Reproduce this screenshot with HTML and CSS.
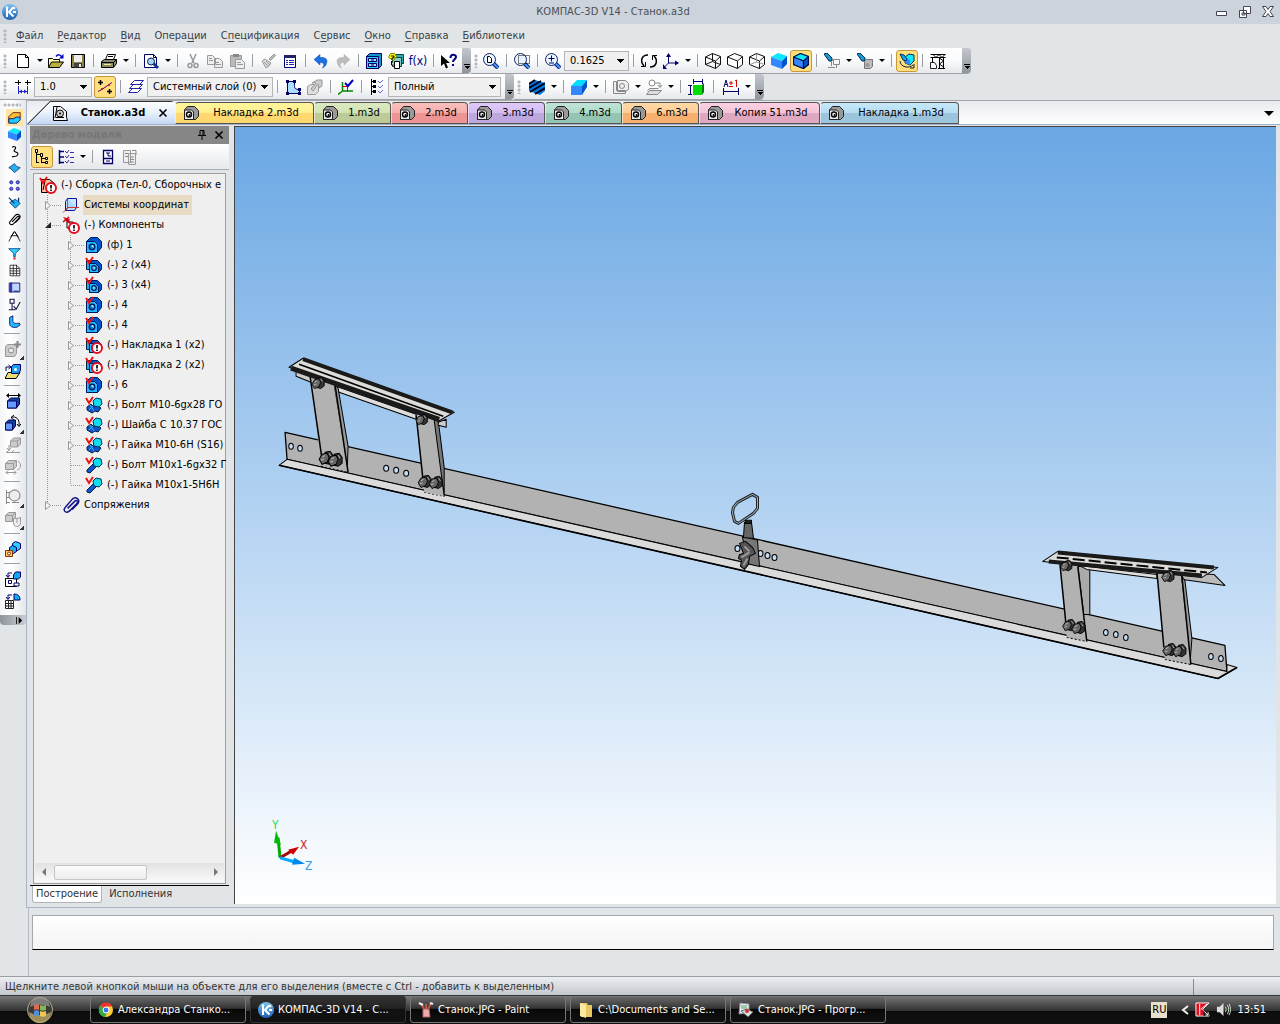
FILE: index.html
```html
<!DOCTYPE html>
<html lang="ru">
<head>
    <meta charset="UTF-8">
    <title>КОМПАС-3D V14 - Станок.a3d</title>
    <meta name="viewport" content="width=device-width, initial-scale=1.0">
    <link rel="stylesheet" href="styles.css">
</head>
<body>
    <!-- icon set -->
    <svg class="defs" aria-hidden="true">
        <defs>
            <linearGradient id="orb" x1="0" y1="0" x2="0" y2="1"><stop offset="0" stop-color="#7cc0f0"/><stop offset="1" stop-color="#1c62b4"/></linearGradient>
            <symbol id="kompas" viewBox="0 0 16 16"><circle cx="8" cy="8" r="8" fill="url(#orb)"/><path d="M5 3v10M11 3.500L7 8l4.500 4.500M11 8h3" stroke="#fff" stroke-width="2" fill="none"/><circle cx="5" cy="3.500" r="1.300" fill="#fff"/><circle cx="12" cy="4" r="1.300" fill="#fff"/></symbol>
            <symbol id="new" viewBox="0 0 16 16"><path d="M2.500 1.500h8l3 3v10h-11z" fill="#fff" stroke="#000"/><path d="M10.500 1.500v3h3" fill="none" stroke="#000"/></symbol>
            <symbol id="open" viewBox="0 0 16 16"><path d="M.5 14V5.500h4l1 1h6V9" fill="#ffffb0" stroke="#000"/><path d="M.5 14.500l3-5.500h12l-4 5.500z" fill="#b8b040" stroke="#000"/><path d="M8 3.500c2-2.500 4-2 6 .5" fill="none" stroke="#00c" stroke-width="1.500"/><path d="M15.500 1v4.500H11z" fill="#00c"/></symbol>
            <symbol id="save" viewBox="0 0 16 16"><path d="M1.500 1.500h13v13h-13z" fill="#8c8340" stroke="#000"/><path d="M4 2h8v7H4z" fill="#eee"/><path d="M4 10h8v4.500H4z" fill="#444"/><path d="M9 11h2v3H9z" fill="#eee"/></symbol>
            <symbol id="print" viewBox="0 0 16 16"><path d="M4.500 6.500l2-5h8l-2 5" fill="#fff" stroke="#000"/><path d="M.5 8.500l3-2h12v4l-3 4H.5z" fill="#8a8a68" stroke="#000"/><path d="M.5 9.500h12l3-3M7 3.500h5M12.500 9v5" stroke="#000" fill="none"/><path d="M3 11h7v1H3z" fill="#ee8"/></symbol>
            <symbol id="preview" viewBox="0 0 16 16"><path d="M1.500 1.500h9l3 3v10h-12z" fill="#fff" stroke="#006"/><path d="M10.500 1.500v3h3" fill="none" stroke="#006"/><path d="M10 10l5 5" stroke="#139" stroke-width="3"/><circle cx="8" cy="8.500" r="3.500" fill="#a8d4f4" stroke="#025"/></symbol>
            <symbol id="cut" viewBox="0 0 16 16"><path d="M5 1l4 9M11 1L7 10" stroke="#999" stroke-width="1.500"/><circle cx="5" cy="12.500" r="2" fill="none" stroke="#999" stroke-width="1.500"/><circle cx="11" cy="12.500" r="2" fill="none" stroke="#999" stroke-width="1.500"/></symbol>
            <symbol id="copy" viewBox="0 0 16 16"><path d="M.5 2.500h5l3 3v6h-8zM7.500 5.500h5l3 3v6h-8z" fill="#eee" stroke="#999"/><path d="M2 5.500h3M2 7.500h4M9 9.500h3M9 11.500h5" stroke="#999"/></symbol>
            <symbol id="paste" viewBox="0 0 16 16"><path d="M1.500 2.500h11v11h-11z" fill="#bbb" stroke="#999"/><path d="M4 1h6v3H4z" fill="#888"/><path d="M6.500 6.500h6l3 3v6h-9z" fill="#eee" stroke="#999"/><path d="M8 9.500h4M8 11.500h6" stroke="#999"/></symbol>
            <symbol id="brush" viewBox="0 0 16 16"><path d="M9 6l5-5 1.500 1.500-5 5z" fill="#bbb" stroke="#999"/><path d="M2 8l3-2 6 4-2 3-3 2z" fill="#ddd" stroke="#999"/><path d="M4 9l4 4M6 8l4 4" stroke="#999"/></symbol>
            <symbol id="list" viewBox="0 0 16 16"><path d="M2.500 2.500h11v12h-11z" fill="#fff" stroke="#000080"/><path d="M2 2h12v3H2z" fill="#226"/><path d="M4 7.500h2M7 7.500h5M4 9.500h2M7 9.500h5M4 11.500h2M7 11.500h5" stroke="#22c"/></symbol>
            <symbol id="undo" viewBox="0 0 16 16"><path d="M1 6.500l6-5v3c6-.5 8 2 6.500 6-.5 2-2 3.500-4 4.500 2-3 2-5.500-2.500-5.500V12z" fill="#1c6fe0" stroke="#0a46b0" stroke-width=".5"/></symbol>
            <symbol id="redo" viewBox="0 0 16 16"><path d="M15 6.500l-6-5v3c-6-.5-8 2-6.500 6 .5 2 2 3.500 4 4.500-2-3-2-5.500 2.500-5.500V12z" fill="#bcbcbc" stroke="#aaa" stroke-width=".5"/></symbol>
            <symbol id="lib" viewBox="0 0 16 16"><path d="M.5 3.500l3-3h12v12l-3 3H.5z" fill="#1298c8" stroke="#006"/><path d="M.5 3.500h12v12H.5z" fill="#3cf" stroke="#006"/><path d="M2.500 5.500h8v3h-8zM2.500 10.500h8v3h-8z" fill="#adf" stroke="#006"/><path d="M5 7h3M5 12h3" stroke="#006"/></symbol>
            <symbol id="vars" viewBox="0 0 16 16"><path d="M6.500 1.500h9v9h-9z" fill="#3aa" stroke="#044"/><path d="M4.500 4.500h9v9h-9z" fill="#8cc" stroke="#044"/><path d="M3.500 8v4h2M6.500 8.500h5v7h-5z" fill="#fff" stroke="#000"/><path d="M.5 4.500l2-4h4l2 3-3 4z" fill="#ff0" stroke="#880"/><path d="M3 3h3v2H4v2" fill="none" stroke="#000"/></symbol>
            <symbol id="cursor" viewBox="0 0 16 16"><path d="M0 2v11l3-2.500 2 5 2-1-2-4.500h4z"/><path d="M9.500 5c0-4.500 5.500-4 5.500-1 0 2-3 2.500-3 5M12 11v2" fill="none" stroke="#000080" stroke-width="2"/></symbol>
            <symbol id="glass" viewBox="0 0 16 16"><path d="M10 10l5 5" stroke="#027" stroke-width="4"/><path d="M10 10l5 5" stroke="#49f" stroke-width="2"/><circle cx="6.500" cy="6.500" r="6" fill="#e8f4ff" stroke="#126"/></symbol>
            <symbol id="zoompage" viewBox="0 0 16 16"><use href="#glass"/><path d="M4.500 3.500h2l2 2v4h-4z" fill="#fff" stroke="#000"/></symbol>
            <symbol id="zoomarea" viewBox="0 0 16 16"><use href="#glass"/><path d="M4.500 2.500h11v8h-11z" fill="none" stroke="#000" stroke-dasharray="1 1"/></symbol>
            <symbol id="zoompm" viewBox="0 0 16 16"><use href="#glass"/><path d="M3.500 5.500h6M6.500 2.500v6M4 10h5" stroke="#006"/></symbol>
            <symbol id="rotate" viewBox="0 0 16 16"><path d="M7 2C0 2-1 9 3 13M9 14c7 0 8-7 4-11" fill="none" stroke="#000" stroke-width="1.500"/><path d="M0 13.500h4.500V9M16 2.500h-4.500V7" fill="none" stroke="#000"/></symbol>
            <symbol id="axes" viewBox="0 0 16 16"><path d="M5.500 1v9H15M5.500 10L1 14.500" fill="none" stroke="#006"/><path d="M3 4l2.500-4L8 4zM12 7.500l4 2.500-4 2.500zM0 11v5h4z" fill="#006"/></symbol>
            <symbol id="wire" viewBox="0 0 16 16"><path d="M.5 4l7-3.500 8 3v8l-5 4-10-4zM.5 4l10 4v7.500M10.500 8l5-4.500M7.500.5v8l-7 3M7.500 8.500l8 3" fill="none" stroke="#111"/></symbol>
            <symbol id="hidden" viewBox="0 0 16 16"><path d="M.5 4l7-3.500 8 3v8l-5 4-10-4zM.5 4l10 4v7.500M10.500 8l5-4.500" fill="#fff" stroke="#111"/></symbol>
            <symbol id="thin" viewBox="0 0 16 16"><use href="#hidden"/><path d="M7.500 1v8L1 11.500M7.500 9l7 2" stroke="#999" fill="none"/></symbol>
            <symbol id="shaded" viewBox="0 0 16 16"><path d="M0 4l7-4 9 3-5 5z" fill="#0de8fc"/><path d="M0 4l11 4v8L0 12z" fill="#38f"/><path d="M11 8l5-5v8l-5 5z" fill="#05c"/></symbol>
            <symbol id="edged" viewBox="0 0 16 16"><use href="#shaded"/><path d="M.5 4l7-3.500 8 3v8l-5 4-10-4zM.5 4l10 4v7.500M10.500 8l5-4.500" fill="none" stroke="#00104a" stroke-width="1.300"/></symbol>
            <symbol id="torch" viewBox="0 0 16 16"><path d="M0 1l3-1 5 5v3H5z" fill="#179bd7" stroke="#024"/><path d="M7.500 9v4M4 14.500h7M9.500 6.500h6v5h-6zM12.500 12v3" fill="none" stroke="#888"/></symbol>
            <symbol id="torch2" viewBox="0 0 16 16"><path d="M0 1l3-1 5 5v3H5z" fill="#179bd7" stroke="#024"/><path d="M7.500 8.500l2-2h6v7l-2 2h-6z" fill="#bbb" stroke="#777"/><circle cx="10.500" cy="12" r="2" fill="#999"/></symbol>
            <symbol id="spin" viewBox="0 0 16 16"><path d="M6 4l4-3 5 1v6l-4 4-5-2z" fill="#0de8fc" stroke="#035"/><path d="M6 5l5 2v5l-5-2z" fill="#38f"/><path d="M1 1l4 1 3 4-1 2-3-1z" fill="#1aa4f0" stroke="#035"/><path d="M1 8c0 6 9 8 13 4M11 15h4v-4" fill="none" stroke="#123"/></symbol>
            <symbol id="crane" viewBox="0 0 16 16"><path d="M.5 1.500h15M.5 4.500h15M2.500 4v5M9.500 4v11M13.500 4v11M9.500 5l4 3-4 3 4 3M3 1.500l3 3 3-3 3 3 3-3M8 15.500h7" fill="none" stroke="#000"/><path d="M.5 9.500h4l2 3v3h-6z" fill="#fff" stroke="#222"/></symbol>
            <symbol id="dims" viewBox="0 0 16 16"><path d="M0 3.500h6M3.500 1v5M10 3.500h6M12.500 1v5" stroke="#000"/><path d="M3.500 7v8M12.500 7v8M4 12.500h8" stroke="#22c"/><path d="M4 12.500l3-2v4zM12 12.500l-3-2v4z" fill="#22c"/></symbol>
            <symbol id="snap" viewBox="0 0 16 16"><path d="M1 3.500h5M3.500 1v5M10 12.500h5M12.500 10v5" stroke="#000" stroke-width="1.500"/><path d="M1 12.500l4-2 7-5 3-2" stroke="#808"/><path d="M4 9h2v2H4zM11 5h2v2h-2z" fill="#a33"/></symbol>
            <symbol id="layers" viewBox="0 0 16 16"><path d="M.5 13.500l4-4h9l-4 4zM1.500 9.500l4-4h9l-4 4zM2.500 5.500l4-4h9l-4 4z" fill="#fff" stroke="#22a"/></symbol>
            <symbol id="sketch" viewBox="0 0 16 16"><path d="M2.500 2.500h7v4c0 3 1 4 5 4v4h-12z" fill="#adf" stroke="#006"/><path d="M1 1h3v3H1zM8 1h3v3H8zM1 13h3v3H1zM13 13h3v3h-3zM13 9h3v3h-3z" fill="#006"/></symbol>
            <symbol id="editpart" viewBox="0 0 16 16"><path d="M.5 7.500l3-2h8v7l-3 3h-8z" fill="#ddd" stroke="#999"/><path d="M5 4l5-3h5v6l-3 2-1-4-5 7-2-2 5-6z" fill="#ccc" stroke="#999"/></symbol>
            <symbol id="lcs" viewBox="0 0 16 16"><path d="M4.500 3v9H15M4.500 12L0 15.500" fill="none" stroke="#080" stroke-width="1.500"/><path d="M4.500 7.500h5v5" fill="none" stroke="#d00"/><path d="M7 4l3 3 5-6" fill="none" stroke="#00c" stroke-width="2"/></symbol>
            <symbol id="marks" viewBox="0 0 16 16"><path d="M2.500 0v16M2 2.500h4M2 7.500h4M2 12.500h4" stroke="#000"/><path d="M4 1h3v3H4zM4 6h3v3H4zM4 11h3v3H4z"/><path d="M9 2l2 2 3-3M9 7l2 2 3-3M9 12l2 2 3-3" fill="none" stroke="#66c"/></symbol>
            <symbol id="stripes" viewBox="0 0 16 16"><path d="M0 4l6-3 10 3v8l-5 4-11-4z" fill="#0078d8"/><path d="M0 5l6-4M0 9l12-7M1 13L16 4M6 15l10-6" stroke="#002" stroke-width="2"/></symbol>
            <symbol id="slant" viewBox="0 0 16 16"><path d="M0 7l6-6h10l-5 6z" fill="#0df"/><path d="M0 7h11v9H0z" fill="#38f"/><path d="M11 7l5-6v7l-5 8z" fill="#05c"/></symbol>
            <symbol id="shape" viewBox="0 0 16 16"><path d="M.5 2.500h3v9h9v3h-12zM4.500 1.500h8l3 3v6l-3 2h-8z" fill="#eee" stroke="#888"/><circle cx="9" cy="7" r="2.500" fill="none" stroke="#888"/></symbol>
            <symbol id="plane" viewBox="0 0 16 16"><path d="M.5 15.500l3-4h12l-4 4zM1.500 11.500l2-2h9" fill="#ddd" stroke="#888"/><circle cx="6" cy="4" r="3" fill="#fff" stroke="#888"/><path d="M9 4h5v4M11.500 6L14 8.500 16 6" fill="none" stroke="#888"/></symbol>
            <symbol id="measure" viewBox="0 0 16 16"><path d="M5 6h9v10H5z" fill="#0d0"/><path d="M14 6l2-2v9l-2 3z" fill="#070"/><path d="M5.500 0v5M14.500 0v5M6 2.500h8M0 6.500h4M0 15.500h4M2.500 7v8" stroke="#006"/></symbol>
            <symbol id="tol" viewBox="0 0 16 16"><path d="M1 8l2-7 2 7M2 5.500h2M.5 9v7M15.500 9v7M1 12.500h14" fill="none" stroke="#006"/><path d="M8 2v4M6 4h4M6 7.500h4M12 2l1.500-1v7" fill="none" stroke="#d00"/></symbol>
            <symbol id="asm" viewBox="0 0 16 16"><path d="M1.500 1.500h7l6 5v6l1 3h-14zM3 13l2-11" fill="#f4f4f4" stroke="#000"/><circle cx="8" cy="8.500" r="3.500" fill="#ccc" stroke="#000"/><circle cx="8" cy="8.500" r="1" /><path d="M4 12.500h8" stroke="#000"/></symbol>
            <symbol id="part" viewBox="0 0 16 16"><path d="M1.500 5l3-3.500h7l4 4v6l-3 3h-11z" fill="#999" stroke="#222"/><path d="M1.500 5h7l2 2v7.500h-9z" fill="#e8e8e8" stroke="#222"/><circle cx="6" cy="9.500" r="2.500" fill="#fff" stroke="#000" stroke-width="1.400"/><circle cx="6.500" cy="10" r="1"/></symbol>
            <symbol id="solid" viewBox="0 0 16 16"><path d="M1 7l5-5h9v5l-4 3H6v4H1z" fill="#fb3" stroke="#510"/><path d="M1 9.500h6l3-2h5V11l-4 4H1z" fill="#2cf" stroke="#006"/></symbol>
            <symbol id="curve" viewBox="0 0 16 16"><path d="M5 3c3-3 6 0 3 3s6 2 4 6-6 1-7 3" fill="none" stroke="#000" stroke-width="1.300"/></symbol>
            <symbol id="surf" viewBox="0 0 16 16"><path d="M1 7l7-5c1 3 4 4 7 5l-7 6C6 11 5 9 1 7z" fill="#2aaeea" stroke="#038"/></symbol>
            <symbol id="array" viewBox="0 0 16 16"><g fill="#66d" stroke="#22a"><circle cx="4" cy="4" r="2"/><circle cx="12" cy="4" r="2"/><circle cx="4" cy="12" r="2"/><circle cx="12" cy="12" r="2"/></g></symbol>
            <symbol id="plate" viewBox="0 0 16 16"><path d="M2 8l7-4 6 5-6 6z" fill="#1bb4ee" stroke="#038"/><path d="M1 2l7 7M13 2v5" stroke="#036" stroke-width="1.500"/></symbol>
            <symbol id="clip" viewBox="0 0 16 16"><path d="M5 11l6-6c2-2 4 0 2 2l-6 6c-3 3-7 0-4-3l6-7c3-3 8 0 5 4l-5 5" fill="none" stroke="currentColor" stroke-width="1.300"/></symbol>
            <symbol id="compass" viewBox="0 0 16 16"><path d="M7.500 2L1 14M8.500 2l6.500 12M4 7h8M8 2L3 9M8 2l5 7" fill="none" stroke="#000"/></symbol>
            <symbol id="filter" viewBox="0 0 16 16"><path d="M1 2h14L9 8v4H7V8z" fill="#3cf" stroke="#048"/><circle cx="8" cy="14" r="1.500" fill="#d33"/></symbol>
            <symbol id="grid" viewBox="0 0 16 16"><path d="M2.500 1.500h8l4 4v9h-12zM2.500 5.500h12M2.500 8.500h12M2.500 11.500h12M6.500 1v13M10.500 1v13" fill="#fff" stroke="#222"/></symbol>
            <symbol id="book" viewBox="0 0 16 16"><path d="M1.500 2.500h13v11h-13z" fill="#bcd6ff" stroke="#006"/><path d="M4.500 2v12M7 12.500h6" stroke="#006"/><path d="M2 2h2v12H2z" fill="#33a"/></symbol>
            <symbol id="rough" viewBox="0 0 16 16"><path d="M2.500 1.500h5v5h-5zM5 7v7M1 14.500h8M7 10l3 4 5-9" fill="none" stroke="#114" stroke-width="1.300"/></symbol>
            <symbol id="elbow" viewBox="0 0 16 16"><path d="M2 3l4-2v6c0 3 2 4 8 3l1 2-4 3c-6 1-9-1-9-5z" fill="#2bf" stroke="#006"/></symbol>
            <symbol id="g-add" viewBox="0 0 16 16"><path d="M.5 5.500l2-2h9v9l-2 3h-9z" fill="#ccc" stroke="#999"/><circle cx="6" cy="9.500" r="2.500" fill="#eee" stroke="#888"/><path d="M12.500 0v7M9 3.500h7" stroke="#888" stroke-width="2"/></symbol>
            <symbol id="g-cut" viewBox="0 0 16 16"><path d="M.5 4.500l3-3h7v5l-3 4h-7zM.5 4.500h7v6M7.500 4.500l3-3" fill="#ccc" stroke="#999"/><path d="M8.500 7.500c2 0 5 0 7-1v5c0 3-2 4-4 4s-3-2-3-4zM12 8v4" fill="#eee" stroke="#999"/></symbol>
            <symbol id="insert" viewBox="0 0 16 16"><path d="M0 15.500l3-6h12l-4 6z" fill="#e8e070" stroke="#000"/><path d="M6.500 3.500l2-2h7v6l-2 3h-7z" fill="#1a9cf0" stroke="#006"/><circle cx="10.500" cy="6.500" r="1.500" fill="#fff"/><path d="M1 8V4h4M3.500 2L6 4 3.500 6" fill="none" stroke="#006"/></symbol>
            <symbol id="move" viewBox="0 0 16 16"><path d="M2.500 8l3-3h9v6l-3 4h-9z" fill="#149" stroke="#006"/><path d="M2.500 8h9v7h-9z" fill="#69f" stroke="#006"/><path d="M3 2.500h11" stroke="#000"/><path d="M1 2.500L4 0v5zM16 2.500L13 0v5z"/></symbol>
            <symbol id="turn" viewBox="0 0 16 16"><path d="M.5 8l3-3h7v6l-3 4h-7z" fill="#149" stroke="#006"/><path d="M.5 8h7v7h-7z" fill="#69f" stroke="#006"/><path d="M6 2.500c5-2 9 2 8 8M12 9l2 2.500L16 9M9 0L6 2.500 9 5" fill="none" stroke="#000"/></symbol>
            <symbol id="g-box" viewBox="0 0 16 16"><path d="M5.500 4l3-3h7v6l-3 3h-7zM5.500 4h7v6M12.500 4l3-3" fill="#ccc" stroke="#999"/><path d="M1 15.500h14M4 8v5M2 11l2 2.500L6 11M2 15l2-2M7 15l2-2" fill="none" stroke="#999"/></symbol>
            <symbol id="g-turn" viewBox="0 0 16 16"><path d="M.5 4.500l3-3h8v6l-3 3h-8zM.5 4.500h8v6M8.500 4.500l3-3" fill="#ccc" stroke="#999"/><path d="M13 2c4 3 3 8-1 9M1 13.500h10M3 11.500l-2 2 2 2M9 11.500l2 2-2 2" fill="none" stroke="#999"/></symbol>
            <symbol id="g-ring" viewBox="0 0 16 16"><circle cx="9.500" cy="6.500" r="5.500" fill="#eee" stroke="#999" stroke-width="1.300"/><path d="M1.500 1v14M1 3.500h4M1 8.500h3M1 13.500h4M7 13.500h7" stroke="#888"/></symbol>
            <symbol id="nuts" viewBox="0 0 16 16"><path d="M7.500 2.500l3-2 5 2v5l-3 2-5-2z" fill="#3cf" stroke="#006"/><path d="M4.500 6.500l3-2 4 2v4l-3 2-4-2z" fill="#2ae" stroke="#006"/><path d="M.5 9.500h7v6h-7z" fill="#fc6" stroke="#830"/><circle cx="4" cy="12.500" r="1.500" fill="#fff" stroke="#830"/></symbol>
            <symbol id="doc" viewBox="0 0 16 16"><path d="M.5 7.500h11v8H.5z" fill="#fff" stroke="#000"/><path d="M3.500 9.500h3v3h-3zM9 12h5v3H9z" fill="#fff" stroke="#006"/><path d="M8.500 4l2-3h5v5l-2 2h-5z" fill="#1ae" stroke="#006"/><path d="M7 2H3v4M1 4l2 2.500L5 4" fill="none" stroke="#006"/></symbol>
            <symbol id="docgrid" viewBox="0 0 16 16"><path d="M.5 7.500h8v8h-8zM.5 10.500h8M.5 13h8M3.500 8v8M6 8v8" fill="#fff" stroke="#222"/><path d="M9 1c4 0 6 2 6 6H9z" fill="#1ae" stroke="#006"/><path d="M7 2H3v4M1 4l2 2.500L5 4" fill="none" stroke="#006"/></symbol>
            <symbol id="tree" viewBox="0 0 16 16"><path d="M2.500 1v13M2 5.500h5M2 13.500h3M7.500 8v6M7 9.500h4M7 13.500h4" stroke="#000"/><path d="M1.500.5h2v3h-2zM6.500 4.500h2v3h-2zM11.500 8.500h2v2h-2zM11.500 12.500h2v2h-2z" fill="#fff" stroke="#000"/></symbol>
            <symbol id="checks" viewBox="0 0 16 16"><path d="M1.500 1v14M1 2.500h5M1 8h5M1 13.500h5" stroke="#006" stroke-width="1.500"/><path d="M7 2l2 2 2-3M7 7l2 2 2-3M7 12l2 2 2-3M12 3.500h4M12 8.500h4M12 13.500h4" fill="none" stroke="#33a"/></symbol>
            <symbol id="split" viewBox="0 0 16 16"><path d="M3.500 1.500h9v13h-9zM3 9.500h10" fill="#fff" stroke="#006" stroke-width="1.300"/><path d="M6 4h4M8 4v3h3M6 12h4" stroke="#006" fill="none"/></symbol>
            <symbol id="g-doc" viewBox="0 0 16 16"><path d="M1.500 1.500h7v12h-7zM6.500 4.500h7v11h-7z" fill="#eee" stroke="#999"/><path d="M3 4.500h3M3 7.500h3M8 8h4M8 10.500h4M8 13h4M10 1.500h4V6" fill="none" stroke="#888"/></symbol>
            <symbol id="warn" viewBox="0 0 18 18"><circle cx="12" cy="12" r="5" fill="#fff" stroke="#e01020" stroke-width="2"/><path d="M12 9v3.500M12 13.500V15" stroke="#000" stroke-width="1.600"/></symbol>
            <symbol id="tick" viewBox="0 0 18 18"><path d="M1 2l3 5 4-6" fill="none" stroke="#f01010" stroke-width="2"/></symbol>
            <symbol id="t-root" viewBox="0 0 18 18"><path d="M2.500 3.500h8l5 4v9h-13z" fill="#fb9" stroke="#000"/><path d="M4 14L6 5" stroke="#000"/><use href="#tick"/><use href="#warn"/></symbol>
            <symbol id="t-cs" viewBox="0 0 18 18"><path d="M5.500 2.500h9v9h-9z" fill="#cde6ff" stroke="#119"/><path d="M5.500 2.500l-2 3v9h9l2-3M3.500 14.500l2-3" fill="#8cf" fill-opacity=".5" stroke="#119"/><path d="M5 11.500h12M5.500 12L1 16.500" stroke="#c33"/></symbol>
            <symbol id="t-comp" viewBox="0 0 18 18"><path d="M5 6h6v6H5z" fill="#fff" stroke="#000"/><path d="M1 1l7 2-2 5z" fill="#e01020"/><path d="M1 6l6-5M5 4l4 4" stroke="#b01" stroke-width="1.500"/><use href="#warn"/></symbol>
            <symbol id="t-part" viewBox="0 0 18 18"><path d="M1.500 5.500l4-4h7l4 4v6l-4 5h-11z" fill="#05c" stroke="#001a60"/><path d="M1.500 5.500h8l3 3v8h-11z" fill="#2bf" stroke="#001a60"/><circle cx="7" cy="11" r="2.800" fill="#07c" stroke="#001a60" stroke-width="1.300"/><path d="M6 10l2-1 1 3z" fill="#cff"/></symbol>
            <symbol id="t-ptick" viewBox="0 0 18 18"><use href="#t-part"/><use href="#tick"/></symbol>
            <symbol id="t-many" viewBox="0 0 18 18"><path d="M1.500 4.500h8l3 3v6h-11z" fill="#2ae" stroke="#024"/><path d="M4.500 7.500l3-3h5l4 4v5l-3 3h-9z" fill="#05c" stroke="#001a60"/><path d="M4.500 7.500h6l3 3v6h-9z" fill="#2bf" stroke="#001a60"/><circle cx="9" cy="12" r="2.300" fill="#5df" stroke="#001a60" stroke-width="1.300"/><use href="#tick"/></symbol>
            <symbol id="t-warn" viewBox="0 0 18 18"><use href="#t-many"/><use href="#warn"/></symbol>
            <symbol id="t-bolt" viewBox="0 0 18 18"><path d="M2 14l7-7 3 3-7 7-3-1z" fill="#15c" stroke="#024"/><path d="M8 5l3-3 5 1 1 5-3 3-5-1z" fill="#1de" stroke="#035"/><use href="#tick"/></symbol>
            <symbol id="t-bolts" viewBox="0 0 18 18"><path d="M2 11l4-3 3 3 3-2 4 3-3 4-3-1-3 2-5-3z" fill="#15c" stroke="#024"/><path d="M5 9l4 6M9 9l-5 5" stroke="#4bf"/><path d="M8 5l3-3 5 1 1 5-3 3-5-1z" fill="#1de" stroke="#035"/><use href="#tick"/></symbol>
            <symbol id="pin" viewBox="0 0 10 10"><path d="M3 .5h4v5H3zM1 5.500h8M5 6v4M6 1v4" fill="none" stroke="#000"/></symbol>
            <symbol id="cross" viewBox="0 0 10 10"><path d="M1.500 1.500l7 7M8.500 1.500l-7 7" stroke="#000" stroke-width="1.600"/></symbol>
            <!-- tree connectors -->
            <symbol id="c-shut" viewBox="0 0 23 20"><path d="M8.500 0v20M13 10.500h9" stroke="#999" stroke-dasharray="1 1"/><path d="M6.500 6.500l5 4-5 4z" fill="#f6f6f6" stroke="#999"/></symbol>
            <symbol id="c-last" viewBox="0 0 23 20"><path d="M8.500 0v10M13 10.500h9" stroke="#999" stroke-dasharray="1 1"/><path d="M6.500 6.500l5 4-5 4z" fill="#f6f6f6" stroke="#999"/></symbol>
            <symbol id="c-open" viewBox="0 0 23 20"><path d="M8.500 0v20M13 10.500h9" stroke="#999" stroke-dasharray="1 1"/><path d="M12 7v6H6z" fill="#222"/></symbol>
            <symbol id="c-line" viewBox="0 0 23 20"><path d="M8.500 0v20" stroke="#999" stroke-dasharray="1 1"/></symbol>
            <symbol id="c-tee" viewBox="0 0 23 20"><path d="M8.500 0v20M9 10.500h12" stroke="#999" stroke-dasharray="1 1"/></symbol>
            <symbol id="c-end" viewBox="0 0 23 20"><path d="M8.500 0v10M9 10.500h12" stroke="#999" stroke-dasharray="1 1"/></symbol>
        </defs>
    </svg>

    <header class="titlebar">
        <svg class="logo"><use href="#kompas"/></svg>
        <h1>КОМПАС-3D V14 - Станок.a3d</h1>
        <div class="winbtns">
            <button aria-label="Свернуть"><svg viewBox="0 0 12 12"><path d="M.5 5.500h10v4H.5z" fill="#fff" stroke="#445"/></svg></button>
            <button aria-label="Восстановить"><svg viewBox="0 0 12 12"><path d="M4.500.5h7v7h-7zM.5 4.500h7v7h-7zM3 7h3v2H3z" fill="#fff" stroke="#445"/></svg></button>
            <button aria-label="Закрыть"><svg viewBox="0 0 12 12"><path d="M.5.5H4l2 3 2-3h3.500L8 5.500l3.500 5H8l-2-3-2 3H.5l3.500-5z" fill="#fff" stroke="#445"/></svg></button>
        </div>
    </header>

    <nav class="menu">
        <span class="grip"></span>
        <a href="#"><u>Ф</u>айл</a>
        <a href="#"><u>Р</u>едактор</a>
        <a href="#"><u>В</u>ид</a>
        <a href="#">Опера<u>ц</u>ии</a>
        <a href="#">С<u>п</u>ецификация</a>
        <a href="#">С<u>е</u>рвис</a>
        <a href="#"><u>О</u>кно</a>
        <a href="#"><u>С</u>правка</a>
        <a href="#"><u>Б</u>иблиотеки</a>
    </nav>

    <div class="bars">
        <div class="bar">
            <span class="grip"></span>
            <button><svg><use href="#new"/></svg></button><button class="caret"></button>
            <button><svg><use href="#open"/></svg></button>
            <button><svg><use href="#save"/></svg></button>
            <i class="sep"></i>
            <button><svg><use href="#print"/></svg></button><button class="caret"></button>
            <i class="sep"></i>
            <button><svg><use href="#preview"/></svg></button><button class="caret"></button>
            <i class="sep"></i>
            <button><svg><use href="#cut"/></svg></button>
            <button><svg><use href="#copy"/></svg></button>
            <button><svg><use href="#paste"/></svg></button>
            <i class="sep"></i>
            <button><svg><use href="#brush"/></svg></button>
            <button><svg><use href="#list"/></svg></button>
            <i class="sep"></i>
            <button><svg><use href="#undo"/></svg></button>
            <button><svg><use href="#redo"/></svg></button>
            <i class="sep"></i>
            <button><svg><use href="#lib"/></svg></button>
            <button><svg><use href="#vars"/></svg></button>
            <button class="fx">f(x)</button>
            <i class="sep"></i>
            <button><svg><use href="#cursor"/></svg></button>
            <button class="cap"></button>
        </div>
        <div class="bar view-bar">
            <span class="grip"></span>
            <button><svg><use href="#zoompage"/></svg></button>
            <i class="sep"></i>
            <button><svg><use href="#zoomarea"/></svg></button>
            <i class="sep"></i>
            <button><svg><use href="#zoompm"/></svg></button>
            <select class="scale" aria-label="Масштаб"><option>0.1625</option></select>
            <i class="sep"></i>
            <button><svg><use href="#rotate"/></svg></button>
            <button><svg><use href="#axes"/></svg></button><button class="caret"></button>
            <i class="sep"></i>
            <button><svg><use href="#wire"/></svg></button>
            <button><svg><use href="#hidden"/></svg></button>
            <button><svg><use href="#thin"/></svg></button>
            <button><svg><use href="#shaded"/></svg></button>
            <button class="on"><svg><use href="#edged"/></svg></button>
            <i class="sep"></i>
            <button><svg><use href="#torch"/></svg></button><button class="caret"></button>
            <button><svg><use href="#torch2"/></svg></button><button class="caret"></button>
            <i class="sep"></i>
            <button class="on"><svg><use href="#spin"/></svg></button>
            <i class="sep"></i>
            <button><svg><use href="#crane"/></svg></button>
            <button class="cap"></button>
        </div>
    </div>
    <div class="bars">
        <div class="bar">
            <span class="grip"></span>
            <button><svg><use href="#dims"/></svg></button>
            <select class="step" aria-label="Шаг курсора"><option>1.0</option></select>
            <button class="on"><svg><use href="#snap"/></svg></button>
            <i class="sep"></i>
            <button><svg><use href="#layers"/></svg></button>
            <select class="layer" aria-label="Слой"><option>Системный слой (0)</option></select>
            <i class="sep"></i>
            <button><svg><use href="#sketch"/></svg></button>
            <button><svg><use href="#editpart"/></svg></button>
            <i class="sep"></i>
            <button><svg><use href="#lcs"/></svg></button>
            <i class="sep"></i>
            <button><svg><use href="#marks"/></svg></button>
            <select class="mode" aria-label="Тип загрузки"><option>Полный</option></select>
            <button class="cap"></button>
        </div>
        <div class="bar">
            <span class="grip"></span>
            <button><svg><use href="#stripes"/></svg></button><button class="caret"></button>
            <i class="sep"></i>
            <button><svg><use href="#slant"/></svg></button><button class="caret"></button>
            <i class="sep"></i>
            <button><svg><use href="#shape"/></svg></button><button class="caret"></button>
            <button><svg><use href="#plane"/></svg></button><button class="caret"></button>
            <i class="sep"></i>
            <button><svg><use href="#measure"/></svg></button>
            <i class="sep wide"></i>
            <button><svg><use href="#tol"/></svg></button><button class="caret"></button>
            <button class="cap"></button>
        </div>
    </div>

    <main class="work">
        <aside class="side">
            <div class="sidebar">
                <span class="grip-h"></span>
                <button class="small on"><svg><use href="#solid"/></svg></button>
                <button class="small"><svg><use href="#shaded"/></svg></button>
                <button class="small"><svg><use href="#curve"/></svg></button>
                <button class="small"><svg><use href="#surf"/></svg></button>
                <button class="small"><svg><use href="#array"/></svg></button>
                <button class="small"><svg><use href="#plate"/></svg></button>
                <button class="small"><svg><use href="#clip"/></svg></button>
                <button class="small"><svg><use href="#compass"/></svg></button>
                <button class="small"><svg><use href="#filter"/></svg></button>
                <button class="small"><svg><use href="#grid"/></svg></button>
                <button class="small"><svg><use href="#book"/></svg></button>
                <button class="small"><svg><use href="#rough"/></svg></button>
                <button class="small"><svg><use href="#elbow"/></svg></button>
                <i class="sep-h"></i>
                <button class="more"><svg><use href="#g-add"/></svg></button>
                <button><svg><use href="#insert"/></svg></button>
                <i class="sep-h"></i>
                <button><svg><use href="#move"/></svg></button>
                <button class="more"><svg><use href="#turn"/></svg></button>
                <button><svg><use href="#g-box"/></svg></button>
                <button><svg><use href="#g-turn"/></svg></button>
                <i class="sep-h"></i>
                <button class="more"><svg><use href="#g-ring"/></svg></button>
                <button class="more"><svg><use href="#g-cut"/></svg></button>
                <i class="sep-h"></i>
                <button><svg><use href="#nuts"/></svg></button>
                <i class="sep-h"></i>
                <button><svg><use href="#doc"/></svg></button>
                <button><svg><use href="#docgrid"/></svg></button>
                <button class="side-cap" aria-label="Ещё"><svg viewBox="0 0 8 8"><path d="M.5 0v8" stroke="#000"/><path d="M3 0l4 4-4 4z"/></svg></button>
            </div>
        </aside>

        <section class="docs">
            <div class="tabs">
                <button class="tab active"><svg><use href="#asm"/></svg><span>Станок.a3d</span><svg class="x"><use href="#cross"/></svg></button>
                <button class="tab long yellow"><svg><use href="#part"/></svg><span>Накладка 2.m3d</span></button>
                <button class="tab green"><svg><use href="#part"/></svg><span>1.m3d</span></button>
                <button class="tab red"><svg><use href="#part"/></svg><span>2.m3d</span></button>
                <button class="tab violet"><svg><use href="#part"/></svg><span>3.m3d</span></button>
                <button class="tab teal"><svg><use href="#part"/></svg><span>4.m3d</span></button>
                <button class="tab orange"><svg><use href="#part"/></svg><span>6.m3d</span></button>
                <button class="tab mid pink"><svg><use href="#part"/></svg><span>Копия 51.m3d</span></button>
                <button class="tab long blue"><svg><use href="#part"/></svg><span>Накладка 1.m3d</span></button>
                <button class="caret tabs-more" aria-label="Список документов"></button>
            </div>

            <div class="doc-area">
                <div class="panel">
                    <div class="panel-head">
                        <h2>Дерево модели</h2>
                        <button aria-label="Закрепить"><svg><use href="#pin"/></svg></button>
                        <button aria-label="Закрыть"><svg><use href="#cross"/></svg></button>
                    </div>
                    <div class="panel-tools">
                        <button class="on"><svg><use href="#tree"/></svg></button>
                        <button class="spaced"><svg><use href="#checks"/></svg></button><button class="caret"></button>
                        <i class="sep"></i>
                        <button><svg><use href="#split"/></svg></button>
                        <button><svg><use href="#g-doc"/></svg></button>
                    </div>
                    <div class="tree-box">
                        <ul class="tree">
                            <li><svg class="ico"><use href="#t-root"/></svg><span>(-) Сборка (Тел-0, Сборочных е</span></li>
                            <li><svg class="con"><use href="#c-shut"/></svg><svg class="ico"><use href="#t-cs"/></svg><span class="picked">Системы координат</span></li>
                            <li><svg class="con"><use href="#c-open"/></svg><svg class="ico"><use href="#t-comp"/></svg><span>(-) Компоненты</span></li>
                            <li><svg class="con"><use href="#c-line"/></svg><svg class="con"><use href="#c-shut"/></svg><svg class="ico"><use href="#t-part"/></svg><span>(ф) 1</span></li>
                            <li><svg class="con"><use href="#c-line"/></svg><svg class="con"><use href="#c-shut"/></svg><svg class="ico"><use href="#t-many"/></svg><span>(-) 2 (x4)</span></li>
                            <li><svg class="con"><use href="#c-line"/></svg><svg class="con"><use href="#c-shut"/></svg><svg class="ico"><use href="#t-many"/></svg><span>(-) 3 (x4)</span></li>
                            <li><svg class="con"><use href="#c-line"/></svg><svg class="con"><use href="#c-shut"/></svg><svg class="ico"><use href="#t-ptick"/></svg><span>(-) 4</span></li>
                            <li><svg class="con"><use href="#c-line"/></svg><svg class="con"><use href="#c-shut"/></svg><svg class="ico"><use href="#t-ptick"/></svg><span>(-) 4</span></li>
                            <li><svg class="con"><use href="#c-line"/></svg><svg class="con"><use href="#c-shut"/></svg><svg class="ico"><use href="#t-warn"/></svg><span>(-) Накладка 1 (x2)</span></li>
                            <li><svg class="con"><use href="#c-line"/></svg><svg class="con"><use href="#c-shut"/></svg><svg class="ico"><use href="#t-warn"/></svg><span>(-) Накладка 2 (x2)</span></li>
                            <li><svg class="con"><use href="#c-line"/></svg><svg class="con"><use href="#c-shut"/></svg><svg class="ico"><use href="#t-ptick"/></svg><span>(-) 6</span></li>
                            <li><svg class="con"><use href="#c-line"/></svg><svg class="con"><use href="#c-shut"/></svg><svg class="ico"><use href="#t-bolts"/></svg><span>(-) Болт М10-6gх28 ГО</span></li>
                            <li><svg class="con"><use href="#c-line"/></svg><svg class="con"><use href="#c-shut"/></svg><svg class="ico"><use href="#t-bolts"/></svg><span>(-) Шайба C 10.37 ГОС</span></li>
                            <li><svg class="con"><use href="#c-line"/></svg><svg class="con"><use href="#c-shut"/></svg><svg class="ico"><use href="#t-bolts"/></svg><span>(-) Гайка М10-6Н (S16)</span></li>
                            <li><svg class="con"><use href="#c-line"/></svg><svg class="con"><use href="#c-tee"/></svg><svg class="ico"><use href="#t-bolt"/></svg><span>(-) Болт М10х1-6gх32 Г</span></li>
                            <li><svg class="con"><use href="#c-line"/></svg><svg class="con"><use href="#c-end"/></svg><svg class="ico"><use href="#t-bolt"/></svg><span>(-) Гайка М10х1-5Н6Н</span></li>
                            <li><svg class="con"><use href="#c-last"/></svg><svg class="ico clip"><use href="#clip"/></svg><span>Сопряжения</span></li>
                        </ul>
                        <div class="scroll">
                            <button aria-label="Влево"><svg viewBox="0 0 8 8"><path d="M6 0v8L2 4z" fill="#777"/></svg></button>
                            <div class="track"><div class="thumb"></div></div>
                            <button aria-label="Вправо"><svg viewBox="0 0 8 8"><path d="M2 0v8l4-4z" fill="#777"/></svg></button>
                        </div>
                    </div>
                    <div class="panel-tabs">
                        <button class="cur">Построение</button>
                        <button>Исполнения</button>
                    </div>
                </div>

                <div class="viewport">
                    <svg class="scene" viewBox="235 127 1040 776" preserveAspectRatio="xMinYMin meet">
                        <defs>
                            <symbol id="nut" viewBox="-8 -8 16 16"><path d="M-1-6l5-1 3 4v6l-4 3-4-1z" fill="#333" stroke="#000"/><path d="M-7 1l3-5 5-1 2 4-2 5-5 2z" fill="#666" stroke="#000"/><path d="M-4-1l3-2M-5 2l3-1M3-5l2 3" stroke="#bbb"/></symbol>
                        </defs>
                        <g stroke="#000" stroke-linejoin="round">
                            <!-- beam -->
                            <path d="M285 432l939 213 2 26L287 459z" fill="#b3b2b3" stroke-width="1.300"/>
                            <path d="M287 459l-8 6 938 213 19-11-10-3v7z" fill="#dcdbdb"/>
                            <path d="M279 465l938 213 19-11" fill="none" stroke-width="1.600"/>
                            <g fill="#c4dcf4">
                                <ellipse cx="291" cy="446" rx="2.300" ry="3"/><ellipse cx="300" cy="448" rx="2.300" ry="3"/>
                                <ellipse cx="386" cy="468" rx="2.500" ry="3"/><ellipse cx="396" cy="470" rx="2.500" ry="3"/><ellipse cx="406" cy="473" rx="2.500" ry="3"/>
                                <ellipse cx="737" cy="548" rx="2.500" ry="3"/><ellipse cx="760" cy="553" rx="2.500" ry="3"/><ellipse cx="767" cy="555" rx="2.500" ry="3"/><ellipse cx="774" cy="557" rx="2.500" ry="3"/>
                                <ellipse cx="1105" cy="632" rx="2.300" ry="3"/><ellipse cx="1115" cy="634" rx="2.300" ry="3"/><ellipse cx="1125" cy="637" rx="2.300" ry="3"/>
                                <ellipse cx="1210" cy="656" rx="2.300" ry="3"/><ellipse cx="1220" cy="658" rx="2.300" ry="3"/>
                            </g>
                            <!-- left stand -->
                            <path d="M336 386l80 28v5l-77-27z" fill="#dededc"/>
                            <path d="M296 371v5l15 6v-8z" fill="#ccc"/>
                            <path d="M333 381l5 7 10 58-1 26z" fill="#999"/>
                            <path d="M310 376l23 5 15 91-27-6z" fill="#b3b2b3" stroke="none"/>
                            <path d="M310 376l12 83M335 385l13 87" fill="none" stroke-width="1.500"/>
                            <path d="M321 466l27 6M424 492l20 4" stroke-dasharray="2 2"/>
                            <path d="M416 415l22 5 6 76-20-4z" fill="#b3b2b3" stroke="none"/>
                            <path d="M416 415l7 66" stroke-width="1.500"/>
                            <path d="M434 420l4 0 6 47v29z" fill="#777"/>
                            <path d="M438 422l8-3v8l-8-2z" fill="#ccc"/>
                            <path d="M289 367l14-9 151 54-16 9z" fill="#dcdcd8"/>
                            <path d="M299 364l144 52" stroke-width="1.600"/>
                            <path d="M291 368l148 51" stroke="#1a1a1a" stroke-width="5"/>
                            <path d="M303 359l149 53" stroke="#1a1a1a" stroke-width="4"/>
                            <!-- clamp -->
                            <path d="M733 507l4-5 15-8 5 3v11l-4 5-15 10-4-2-2-9z" fill="none" stroke="#222" stroke-width="3"/>
                            <path d="M733 507l4-5 15-8 5 3v11l-4 5-15 10-4-2-2-9z" fill="none" stroke="#9ab" stroke-width="1"/>
                            <path d="M742 536l15 4 2 26-13-3z" fill="#777"/>
                            <path d="M744 522h7l2 16-10-1z" fill="#666"/>
                            <path d="M745 520h6v3h-6z" fill="#222"/>
                            <path d="M739 543l6-2 7 6 3 6-6 3-1 8-4 5-4-3 1-6-3-2 1-4 4-1z" fill="#555"/>
                            <path d="M741 557l8-5M744 546l5 5M743 565l4-7" stroke="#999" stroke-width="2"/>
                            <!-- right stand -->
                            <path d="M1077 566h12v48l-6 0z" fill="#aaa"/>
                            <path d="M1078 565l78 9v4l-70-9z" fill="#dededc"/>
                            <path d="M1180 572l33 2 11 11-42-6z" fill="#bbb"/>
                            <path d="M1180 575l4 5 7 58-2 26z" fill="#999"/>
                            <path d="M1059 562l18 3 9 76-20-4z" fill="#b3b2b3" stroke="none"/>
                            <path d="M1059 562l6 60M1077 566l9 75" stroke-width="1.500"/>
                            <path d="M1156 571l24 3 10 90-26-5z" fill="#b3b2b3" stroke="none"/>
                            <path d="M1156 571l7 76M1181 576l9 88" stroke-width="1.500"/>
                            <path d="M1066 637l20 4M1164 659l26 5" stroke-dasharray="2 2"/>
                            <path d="M1042 561l15-10 160 16-16 10z" fill="#dcdcd8"/>
                            <path d="M1056 557l150 15" stroke-width="2" stroke-dasharray="12 4"/>
                            <path d="M1048 561l153 14" stroke="#1a1a1a" stroke-width="4"/>
                            <path d="M1057 552l156 15" stroke="#1a1a1a" stroke-width="4"/>
                        </g>
                        <g>
                            <use href="#nut" x="311" y="376" width="14" height="14"/>
                            <use href="#nut" x="318" y="450" width="16" height="16"/><use href="#nut" x="327" y="452" width="16" height="16"/>
                            <use href="#nut" x="415" y="413" width="13" height="13"/>
                            <use href="#nut" x="417" y="474" width="15" height="15"/><use href="#nut" x="428" y="475" width="15" height="15"/>
                            <use href="#nut" x="1059" y="559" width="13" height="13"/>
                            <use href="#nut" x="1061" y="618" width="14" height="14"/><use href="#nut" x="1070" y="620" width="15" height="15"/>
                            <use href="#nut" x="1160" y="569" width="14" height="14"/>
                            <use href="#nut" x="1161" y="642" width="15" height="15"/><use href="#nut" x="1171" y="643" width="15" height="15"/>
                        </g>
                        <!-- axes -->
                        <path d="M280 857l-2-20" stroke="#0a0" stroke-width="3"/><path d="M276 830l5 14-7-2z" fill="#0b0"/>
                        <path d="M280 857l12-7" stroke="#a00" stroke-width="3"/><path d="M299 846l-6 8-5-5z" fill="#c00"/>
                        <path d="M280 857l14 4" stroke="#0af" stroke-width="3"/><path d="M305 863l-13 1 2-7z" fill="#08e"/>
                        <g font-size="12"><text x="272" y="828" fill="#2d5">Y</text><text x="300" y="848" fill="#c22">X</text><text x="305" y="869" fill="#39e">Z</text></g>
                    </svg>
                </div>
            </div>
        </section>
    </main>

    <div class="props"><input type="text" aria-label="Панель свойств"></div>

    <footer class="status">
        <span>Щелкните левой кнопкой мыши на объекте для его выделения (вместе с Ctrl - добавить к выделенным)</span>
        <i></i>
    </footer>

    <div class="taskbar">
        <button class="start" aria-label="Пуск"><svg viewBox="0 0 26 26"><circle cx="13" cy="13" r="12.500" fill="#3b3a36" stroke="#b8ad86"/><path d="M2 15a11 11 0 0 0 22 0c-7 4-15 4-22 0z" fill="#c9b46a" opacity=".7"/><path d="M3 10a10 10 0 0 1 20 0c-6-3-14-3-20 0z" fill="#aaa" opacity=".6"/><path d="M7 8c2-1 3-1 5 0v5c-2-1-3-1-5 0z" fill="#e06a50"/><path d="M13 8c2 1 4 1 6 0v5c-2 1-4 1-6 0z" fill="#86b85a"/><path d="M7 14c2-1 3-1 5 0v5c-2-1-3-1-5 0z" fill="#4f8fe0"/><path d="M13 14c2 1 4 1 6 0v5c-2 1-4 1-6 0z" fill="#f0c850"/></svg></button>
        <button class="task"><svg viewBox="0 0 16 16"><circle cx="8" cy="8" r="7" fill="#fc3"/><path d="M8 8L2 4a7 7 0 0 1 12.500.5H8z" fill="#e33"/><path d="M8 8L2 4a7 7 0 0 0 5 11l3-6z" fill="#3a4"/><circle cx="8" cy="8" r="3" fill="#47e" stroke="#fff"/></svg><span>Александра Станко...</span></button>
        <button class="task pressed"><svg><use href="#kompas"/></svg><span>КОМПАС-3D V14 - С...</span></button>
        <button class="task"><svg viewBox="0 0 16 16"><path d="M5 7h6l1 8H5z" fill="#eaa" stroke="#a66"/><path d="M6 7L3 1M8 7V2M10 7l3-6" stroke="#b54" stroke-width="2"/><path d="M1 1l4 2M12 1l3 1" stroke="#eee" stroke-width="2"/></svg><span>Станок.JPG - Paint</span></button>
        <button class="task"><svg viewBox="0 0 16 16"><path d="M2 1h7l1 2h4v12H3z" fill="#e8c860"/><path d="M2 1l6 2v13l-6-2z" fill="#fbe9a0"/></svg><span>C:\Documents and Se...</span></button>
        <button class="task"><svg viewBox="0 0 16 16"><path d="M2 1l9 1v9l-10 1z" fill="#eef" stroke="#889"/><path d="M3 4h6M3 6h6" stroke="#4a4"/><path d="M3 9l6-2 6 3-5 5z" fill="#ddd" stroke="#666"/><circle cx="9" cy="9" r="2" fill="#c33"/></svg><span>Станок.JPG - Прогр...</span></button>
        <div class="tray">
            <span class="lang">RU</span>
            <svg viewBox="0 0 8 12"><path d="M7 2L2 6l5 4" fill="none" stroke="#eee" stroke-width="2"/></svg>
            <svg class="big" viewBox="0 0 16 16"><path d="M1 1h14l-7 7 7 6v1H1z" fill="#e01020" stroke="#fff"/><path d="M5 2v12M6 8l7-6" stroke="#fff"/><path d="M9 9h6v6H9z" fill="#222"/><path d="M10 10l4 4M14 11v3h-3" stroke="#fff" fill="none"/></svg>
            <svg class="big" viewBox="0 0 16 16"><path d="M1 5h3l4-4v14l-4-4H1z" fill="#ddd"/><path d="M10 5c1 2 1 4 0 6M12 3c2 3 2 7 0 10M14 2c2 4 2 8 0 12" fill="none" stroke="#cfe8cf"/></svg>
            <time>13:51</time>
        </div>
    </div>
</body>
</html>
```
FILE: styles.css
```css
* {
    box-sizing: border-box;
}
body {
    margin: 0;
    min-height: 100vh;
    display: flex;
    flex-direction: column;
    background: #e1e5e8;
    color: #000;
    font-family: "DejaVu Sans Condensed", "DejaVu Sans", sans-serif;
    font-size: 11px;
    line-height: 14px;
}
button, select, input {
    font: inherit;
    color: inherit;
    margin: 0;
    padding: 0;
    border: 0;
    background: none;
}
svg {
    width: 16px;
    height: 16px;
    flex: none;
}
h1, h2 {
    margin: 0;
    font-size: 11px;
    font-weight: normal;
}
.defs {
    position: absolute;
    width: 0;
    height: 0;
}

/* title and menu */
.titlebar {
    display: flex;
    align-items: center;
    height: 24px;
    padding: 0 6px 0 2px;
    background: #cdd3da;
    color: #4a505a;
}
.titlebar h1 {
    flex: 1;
    text-align: center;
    padding-right: 8px;
}
.winbtns {
    display: flex;
    gap: 11px;
}
.winbtns button, .winbtns svg {
    display: block;
    width: 12px;
    height: 12px;
}
.menu {
    display: flex;
    align-items: center;
    gap: 14px;
    height: 24px;
}
.menu .grip {
    margin-right: -10px;
}
.menu a {
    color: #3c3f44;
    text-decoration: none;
}
.menu u {
    text-underline-offset: 2px;
}

/* toolbars */
.grip {
    width: 12px;
    height: 14px;
    flex: none;
    background: radial-gradient(circle at 5px 2px, #b4b8be 1px, transparent 2px) 0 0 / 12px 4px;
}
.bars {
    display: flex;
    height: 26px;
}
.bar {
    display: flex;
    align-items: center;
    height: 26px;
    background: linear-gradient(#fff, #fafbfc 50%, #e6e8ec);
    border-bottom: 1px solid #9da2a8;
    border-radius: 0 4px 4px 0;
}
.bar button, .panel-tools button {
    display: flex;
    align-items: center;
    justify-content: center;
    width: 22px;
    height: 22px;
}
.bar .on, .panel-tools .on {
    border: 1px solid #c9963a;
    border-radius: 3px;
    background: #ffdf7e;
}
.bar .caret, .panel-tools .caret {
    width: 11px;
}
.caret::after {
    content: "";
    border: 3px solid transparent;
    border-top-color: #000;
    border-bottom: 0;
}
.sep {
    width: 1px;
    height: 13px;
    margin: 0 4px;
    background: #9a9fa6;
}
.sep.wide {
    margin: 0 6px;
}
.bar .fx {
    color: #000080;
    font-size: 12px;
}
.bar .cap {
    width: 9px;
    height: 25px;
    margin-left: 2px;
    align-items: flex-end;
    padding-bottom: 3px;
    border-radius: 0 3px 4px 0;
    background: linear-gradient(#c4c8ce, #8f949b);
}
.view-bar .grip {
    width: 9px;
}
.view-bar .cap {
    margin-left: 13px;
}
.cap::after {
    content: "";
    width: 6px;
    height: 6px;
    background: linear-gradient(#000, #000) 0 0 / 6px 1px no-repeat, conic-gradient(from 315deg at 50% 100%, #000 90deg, transparent 0) 0 2px / 6px 3px no-repeat;
}
select {
    appearance: none;
    height: 20px;
    padding: 0 14px 0 5px;
    border: 1px solid #b4b4b4;
    background: #f0f0f0 conic-gradient(from 315deg at 50% 100%, #000 90deg, transparent 0) right 4px center / 7px 4px no-repeat;
    overflow: hidden;
}
.scale { width: 65px; }
.step { width: 58px; margin-right: 2px; }
.layer { width: 126px; }
.mode { width: 113px; margin-right: 2px; }

/* side toolbar */
.work {
    flex: 1;
    display: flex;
}
.side {
    width: 26px;
    flex: none;
}
.sidebar {
    display: flex;
    flex-direction: column;
    align-items: center;
    padding-right: 2px;
    background: linear-gradient(90deg, #f4f5f7, #fff 40%, #e4e7ea);
    border-radius: 0 0 4px 4px;
}
.grip-h {
    width: 18px;
    height: 9px;
    background: radial-gradient(circle at 2px 5px, #b4b8be 1px, transparent 2px) 0 0 / 4px 10px;
}
.sidebar button {
    display: flex;
    align-items: center;
    justify-content: center;
    width: 22px;
    height: 22px;
    margin-left: 2px;
}
.sidebar .small {
    height: 17px;
    margin-left: 5px;
}
.sidebar .small svg {
    width: 13px;
    height: 13px;
}
.sidebar .small.on {
    width: 17px;
    background: #ffe6a0;
}
.sidebar .more {
    background: linear-gradient(135deg, transparent 50%, #333 50%) right bottom / 4px 4px no-repeat;
}
.sep-h {
    width: 16px;
    height: 1px;
    margin: 3px 0 4px;
    background: #9aa2ac;
}
.sidebar .side-cap {
    width: 26px;
    height: 10px;
    margin: 3px -2px 0 0;
    padding-right: 3px;
    justify-content: flex-end;
    background: linear-gradient(90deg, #8f949b, #c8ccd2);
    border-radius: 0 0 4px 4px;
}
.side-cap svg {
    width: 7px;
    height: 7px;
}

/* document tabs */
.docs {
    flex: 1;
    min-width: 0;
    display: flex;
    flex-direction: column;
    border-left: 1px solid #a9b4c6;
    border-top: 1px solid #a4a8ad;
    border-bottom: 1px solid #a9b4c6;
}
.tabs {
    display: flex;
    align-items: flex-end;
    height: 24px;
    background: linear-gradient(#e8eaee, #fff);
    border-bottom: 1px solid #a0b0c8;
}
.tab {
    display: flex;
    align-items: center;
    width: 77px;
    height: 22px;
    padding-left: 7px;
    border: 1px solid #555;
    border-left-color: #fff8;
    border-radius: 4px 4px 0 0;
}
.tab span {
    flex: 1;
    text-align: center;
    white-space: nowrap;
}
.tab.long { width: 139px; }
.tab.mid { width: 121px; }
.tab.active {
    width: 148px;
    height: 23px;
    padding: 0 7px 0 25px;
    border: 0;
    font-weight: bold;
    clip-path: polygon(0 100%, 23px 0, 98% 0, 100% 10%, 100% 100%);
    background: linear-gradient(135deg, transparent 16px, #444 16px, #444 17px, transparent 17px), linear-gradient(#333, #333) 0 0 / 100% 1px no-repeat, linear-gradient(#fff, #e9f1fc 50%, #c5d6f3);
}
.tab .x {
    width: 10px;
    height: 10px;
}
.yellow { background: linear-gradient(#fff59a, #ffee90 50%, #ffd970 50%); }
.green { background: linear-gradient(#dcebc0, #d2e2b4 50%, #bccb98 50%); }
.red { background: linear-gradient(#fbc0bc, #f6aeac 50%, #ee9494 50%); }
.violet { background: linear-gradient(#dfc9fa, #d4bcf2 50%, #bea6de 50%); }
.teal { background: linear-gradient(#bfe5d8, #b0dac8 50%, #94c4b2 50%); }
.orange { background: linear-gradient(#ffd9a4, #ffcd98 50%, #f8b070 50%); }
.pink { background: linear-gradient(#fcd0e2, #f4c4d8 50%, #e0a8c0 50%); }
.blue { background: linear-gradient(#c6e8fa, #b6dcf2 50%, #9cc4dc 50%); }
.tabs-more {
    margin-left: auto;
    width: 22px;
    height: 22px;
}
.tabs-more::after {
    display: inline-block;
    border-width: 5px;
    border-bottom: 0;
}

/* model tree */
.doc-area {
    flex: 1;
    display: flex;
    gap: 5px;
    padding: 1px 4px 3px 3px;
    background: #e1e5e8;
}
.panel {
    width: 199px;
    flex: none;
    display: flex;
    flex-direction: column;
}
.panel-head {
    display: flex;
    align-items: center;
    gap: 7px;
    height: 18px;
    padding: 0 5px 0 2px;
    background: #868686;
}
.panel-head h2 {
    flex: 1;
    color: #777;
    font-weight: bold;
}
.panel-head button, .panel-head svg {
    display: block;
    width: 10px;
    height: 10px;
}
.panel-tools {
    display: flex;
    align-items: center;
    height: 26px;
    padding: 0 1px;
    background: linear-gradient(#fff, #e6e8ec);
    border-bottom: 1px solid #a8adb4;
}
.panel-tools .spaced {
    margin-left: 2px;
}
.tree-box {
    flex: 1;
    display: flex;
    flex-direction: column;
    margin: 3px 3px 1px;
    padding: 1px;
    border: 1px solid #a0a0a0;
    background: #efefef;
}
.tree {
    flex: 1;
    list-style: none;
    margin: 0;
    padding: 0 0 0 4px;
}
.tree li {
    display: flex;
    align-items: center;
    height: 20px;
    white-space: nowrap;
}
.tree .con {
    width: 23px;
    height: 20px;
}
.tree .ico {
    width: 18px;
    height: 18px;
    margin-right: 3px;
}
.tree .clip {
    color: #11118c;
}
.tree span {
    padding: 3px 1px;
}
.tree .picked {
    padding-right: 3px;
    background: #e7dcc3;
}
.scroll {
    display: flex;
    align-items: center;
    height: 19px;
    background: linear-gradient(#e2e2e2, #fafafa);
}
.scroll button {
    display: flex;
    align-items: center;
    justify-content: center;
    width: 17px;
    height: 17px;
}
.scroll svg {
    width: 8px;
    height: 8px;
}
.track {
    flex: 1;
    margin-left: 2px;
}
.thumb {
    width: 61%;
    height: 15px;
    border: 1px solid #c4c4c4;
    border-radius: 2px;
    background: linear-gradient(#fbfbfb, #ededed);
}
.panel-tabs {
    display: flex;
    gap: 7px;
    height: 19px;
    padding-left: 2px;
    border-top: 1px solid #000;
    color: #333;
}
.panel-tabs button {
    height: 17px;
}
.panel-tabs .cur {
    padding: 0 3px;
    border: 1px solid #b0b4ba;
    border-top: 0;
    border-radius: 0 0 3px 3px;
    background: #fff;
}

/* model view */
.viewport {
    flex: 1;
    min-width: 0;
    border-left: 1px solid #444;
    border-top: 1px solid #444;
    background: linear-gradient(#6aa7e4, #b4d3f2 50%, #fff);
}
.scene {
    display: block;
    width: 100%;
    height: auto;
}

.props {
    height: 68px;
    margin-left: 28px;
    padding: 7px 6px 0 3px;
    border-left: 1px solid #b8bcc2;
}
.props input {
    display: block;
    width: 100%;
    height: 35px;
    border: 1px solid #a8a8a8;
    border-bottom-color: #000;
    background: linear-gradient(#fff, #f4f4f4);
}
.status {
    display: flex;
    align-items: center;
    justify-content: space-between;
    height: 19px;
    padding: 2px 86px 0 5px;
    border-top: 1px solid #9a9fa6;
    background: linear-gradient(#eceef0, #c4c8ce);
    color: #333;
}
.status i {
    width: 1px;
    height: 16px;
    background: #888;
}

/* taskbar */
.taskbar {
    display: flex;
    align-items: center;
    gap: 4px;
    height: 30px;
    padding: 0 0 1px 27px;
    border-top: 1px solid #333;
    background: linear-gradient(#777, #333 50%, #0c0c0c 50%, #111);
    color: #fff;
}
.start, .start svg {
    display: block;
    width: 26px;
    height: 26px;
}
.start {
    margin-right: 33px;
}
.task {
    display: flex;
    align-items: center;
    gap: 4px;
    width: 156px;
    height: 27px;
    padding-left: 7px;
    border: 1px solid #777;
    border-radius: 3px;
    background: linear-gradient(#6a6a6a, #333 45%, #080808 50%, #111);
    white-space: nowrap;
}
.pressed {
    border-color: #333;
    background: linear-gradient(#333, #222 45%, #111 50%);
}
.tray {
    display: flex;
    align-items: center;
    gap: 6px;
    margin-left: auto;
    padding-right: 14px;
}
.lang {
    padding: 1px;
    margin-right: 8px;
    background: #e8e0cc;
    color: #000;
}
.tray svg {
    width: 8px;
    height: 12px;
}
.tray .big {
    width: 15px;
    height: 15px;
}
```
